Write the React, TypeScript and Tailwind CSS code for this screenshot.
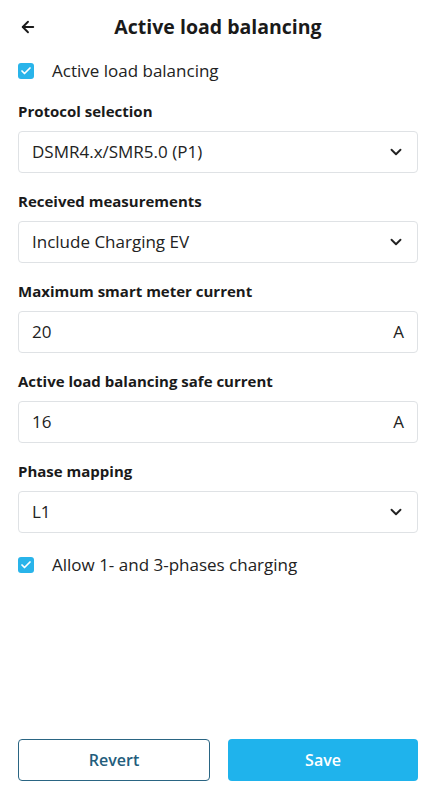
import { ArrowLeft, ChevronDown, Check } from 'lucide-react';

function CheckRow({ label }: { label: string }) {
  return (
    <div className="flex items-center h-6">
      <div className="w-4 h-4 rounded-[3px] bg-[#29b4ea] flex items-center justify-center">
        <Check className="w-3 h-3 text-white" strokeWidth={3.5} />
      </div>
      <span className="ml-[18px] text-[17px] text-[#222]">{label}</span>
    </div>
  );
}

function Field({ label, value, unit, select }: { label: string; value: string; unit?: string; select?: boolean }) {
  return (
    <div className="flex flex-col gap-[10px]">
      <div className="h-5 leading-5 text-[15px] font-bold text-[#1a1a1a]">{label}</div>
      <div className="h-[42px] rounded-[4px] border border-[#dfe2e5] flex items-center justify-between pl-[13px] pr-[12px]">
        <span className="text-[17px] text-[#222]">{value}</span>
        {select ? (
          <ChevronDown className="w-[18px] h-[18px] text-[#222]" strokeWidth={2.5} />
        ) : (
          <span className="text-[17px] text-[#222] pr-[1px]">{unit}</span>
        )}
      </div>
    </div>
  );
}

export default function App() {
  return (
    <div className="w-[436px] h-[800px] bg-white flex flex-col [font-family:'Open_Sans',sans-serif]">
      {/* Header */}
      <div className="h-[54px] relative flex items-center justify-center">
        <ArrowLeft className="absolute left-[19px] top-[18px] w-[18px] h-[18px] text-[#1a1a1a]" strokeWidth={2.5} />
        <h1 className="text-[19.5px] font-bold text-[#1a1a1a]">Active load balancing</h1>
      </div>

      <div className="px-[18px] flex flex-col">
        <div className="mt-[5px]">
          <CheckRow label="Active load balancing" />
        </div>
        <div className="mt-[18px] flex flex-col gap-[18px]">
          <Field label="Protocol selection" value="DSMR4.x/SMR5.0 (P1)" select />
          <Field label="Received measurements" value="Include Charging EV" select />
          <Field label="Maximum smart meter current" value="20" unit="A" />
          <Field label="Active load balancing safe current" value="16" unit="A" />
          <Field label="Phase mapping" value="L1" select />
        </div>
        <div className="mt-[20px]">
          <CheckRow label="Allow 1- and 3-phases charging" />
        </div>
      </div>

      <div className="flex-1" />

      {/* Footer buttons */}
      <div className="px-[18px] pb-[19px] flex gap-[18px]">
        <button className="flex-1 h-[42px] rounded-[4px] border-[1.5px] border-[#2a6583] text-[#235d7c] text-[16px] font-semibold">
          Revert
        </button>
        <button className="flex-1 h-[42px] rounded-[4px] bg-[#1fb3ec] text-white text-[16px] font-semibold">
          Save
        </button>
      </div>
    </div>
  );
}
